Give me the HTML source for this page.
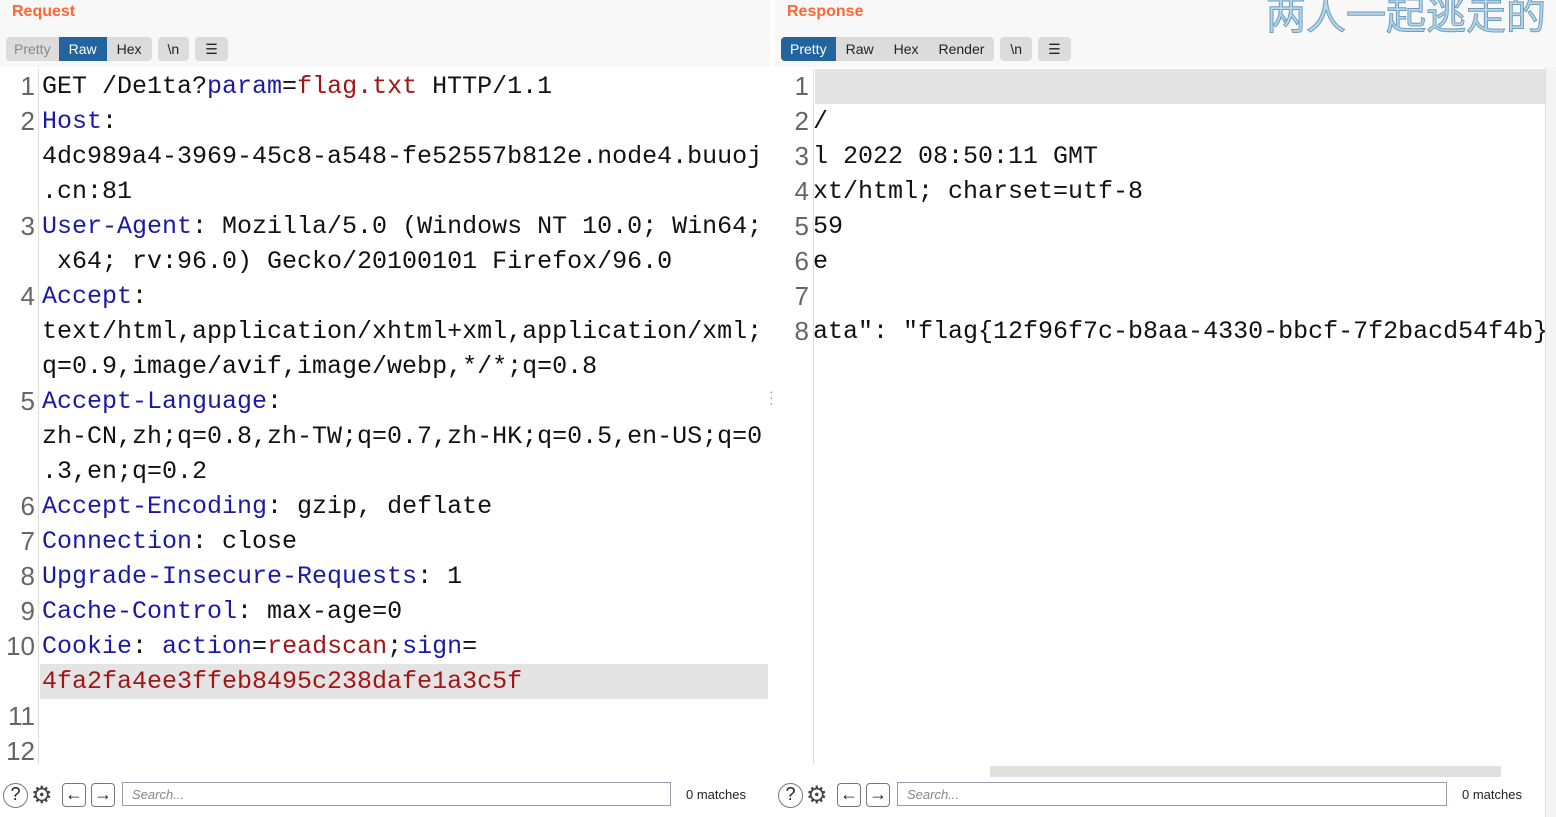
<!DOCTYPE html>
<html><head><meta charset="utf-8"><style>
body{margin:0;width:1556px;height:817px;background:#fff;position:relative;overflow:hidden;font-family:"Liberation Sans","Noto Sans CJK SC",sans-serif}
.abs{position:absolute}
.hdr{background:#f8f8f8}
.title{color:#ff6633;font-weight:bold;font-size:16px}
.tabs{position:absolute;top:37px;height:24px;display:flex;gap:6px}
.grp{display:flex;background:#dcdcdc;border-radius:4px;overflow:hidden;font-size:14px;height:24px;line-height:24px}
.grp span{padding:0 10px;color:#222}
.grp .on{background:#23649e;color:#fff}
.grp .dim{color:#888}
.code{font-family:"Liberation Mono","Noto Sans CJK SC",monospace;font-size:25px;line-height:35px;white-space:pre;color:#111}
.ln{position:absolute;text-align:right;color:#666;font-family:"Liberation Sans",sans-serif;font-size:26px;line-height:35px}
.k{color:#1a1aa6}.v{color:#a31515}
.ic{position:absolute;top:783px;width:22px;height:22px;border:1px solid #777;border-radius:4px;font-size:18px;line-height:20px;text-align:center;color:#222}
.search{position:absolute;top:782px;height:24px;border:1px solid #9a9aae;font-style:italic;color:#888;font-size:13px;line-height:23px;padding-left:9px;box-sizing:border-box}
.m{position:absolute;top:787px;font-size:13px;color:#222}
</style></head><body>
<div class="abs hdr" style="left:0;top:0;width:770px;height:67px"></div>
<div class="abs hdr" style="left:775px;top:0;width:781px;height:67px"></div>
<div class="abs title" style="left:12px;top:3px">Request</div>
<div class="abs title" style="left:787px;top:3px">Response</div>
<div class="abs" style="left:1266px;top:-17px;font-size:40px;color:#b9d6e8;-webkit-text-stroke:1px #6a9ec0;letter-spacing:0px">两人一起逃走的</div>
<div class="tabs" style="left:6px"><div class="grp"><span class="dim" style="padding:0 8px">Pretty</span><span class="on">Raw</span><span>Hex</span></div><div class="grp"><span>\n</span></div><div class="grp"><span>☰</span></div></div>
<div class="tabs" style="left:781px"><div class="grp"><span class="on" style="padding:0 9px">Pretty</span><span>Raw</span><span>Hex</span><span>Render</span></div><div class="grp"><span>\n</span></div><div class="grp"><span>☰</span></div></div>

<div class="abs" style="left:38px;top:69px;width:1px;height:695px;background:#ddd"></div>
<div class="abs" style="left:40px;top:664px;width:728px;height:35px;background:#e4e4e4"></div>
<div class="ln" style="left:0;top:69px;width:35px">1<br>2<br><br><br>3<br><br>4<br><br><br>5<br><br><br>6<br>7<br>8<br>9<br>10<br><br>11<br>12</div>
<div class="abs code" style="left:42px;top:69px">GET /De1ta?<span class="k">param</span>=<span class="v">flag.txt</span> HTTP/1.1
<span class="k">Host</span>:
4dc989a4-3969-45c8-a548-fe52557b812e.node4.buuoj
.cn:81
<span class="k">User-Agent</span>: Mozilla/5.0 (Windows NT 10.0; Win64;
 x64; rv:96.0) Gecko/20100101 Firefox/96.0
<span class="k">Accept</span>:
text/html,application/xhtml+xml,application/xml;
q=0.9,image/avif,image/webp,*/*;q=0.8
<span class="k">Accept-Language</span>:
zh-CN,zh;q=0.8,zh-TW;q=0.7,zh-HK;q=0.5,en-US;q=0
.3,en;q=0.2
<span class="k">Accept-Encoding</span>: gzip, deflate
<span class="k">Connection</span>: close
<span class="k">Upgrade-Insecure-Requests</span>: 1
<span class="k">Cache-Control</span>: max-age=0
<span class="k">Cookie</span>: <span class="k">action</span>=<span class="v">readscan</span>;<span class="k">sign</span>=
<span class="v">4fa2fa4ee3ffeb8495c238dafe1a3c5f</span></div>
<div class="abs" style="left:769px;top:388px;color:#999;font-size:14px;line-height:6px">·<br>·<br>·</div>

<div class="abs" style="left:813px;top:69px;width:1px;height:695px;background:#ddd"></div>
<div class="abs" style="left:815px;top:69px;width:730px;height:35px;background:#e4e4e4"></div>
<div class="ln" style="left:775px;top:69px;width:34px">1<br>2<br>3<br>4<br>5<br>6<br>7<br>8</div>
<div class="abs code" style="left:813px;top:69px">
/
l 2022 08:50:11 GMT
xt/html; charset=utf-8
59
e

ata": "flag{12f96f7c-b8aa-4330-bbcf-7f2bacd54f4b}</div>
<div class="abs" style="left:1545px;top:67px;width:11px;height:750px;background:#f4f4f4;border-left:1px solid #ddd"></div>
<div class="abs" style="left:990px;top:766px;width:511px;height:11px;background:#e0e0e0"></div>

<div class="ic" style="left:3px;border-radius:50%;width:23px;height:23px">?</div>
<div class="abs" style="left:31px;top:781px;font-size:24px;color:#444">⚙</div>
<div class="ic" style="left:62px">←</div><div class="ic" style="left:91px">→</div>
<div class="search" style="left:122px;width:549px">Search...</div>
<div class="m" style="left:686px">0 matches</div>
<div class="ic" style="left:778px;border-radius:50%;width:23px;height:23px">?</div>
<div class="abs" style="left:806px;top:781px;font-size:24px;color:#444">⚙</div>
<div class="ic" style="left:837px">←</div><div class="ic" style="left:866px">→</div>
<div class="search" style="left:897px;width:550px">Search...</div>
<div class="m" style="left:1462px">0 matches</div>
</body></html>
